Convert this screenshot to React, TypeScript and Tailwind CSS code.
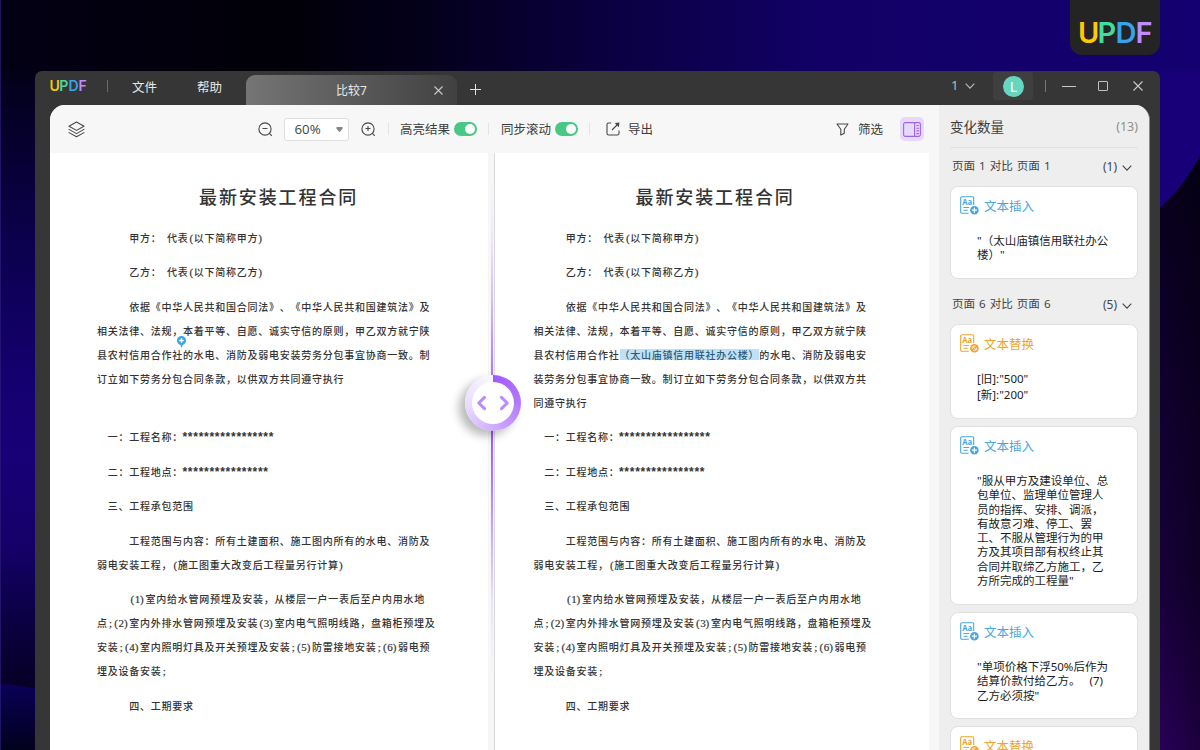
import React from "react";

type Line = { text: string; indent?: number };

const intro: Line[][] = [
  [{ text: "甲方： 代表(以下简称甲方)", indent: 3 }],
  [{ text: "乙方： 代表(以下简称乙方)", indent: 3 }],
];

const rest: Line[][] = [
  [{ text: "一：工程名称：*****************", indent: 1 }],
  [{ text: "二：工程地点：****************", indent: 1 }],
  [{ text: "三、工程承包范围", indent: 1 }],
  [
    { text: "工程范围与内容：所有土建面积、施工图内所有的水电、消防及", indent: 3 },
    { text: "弱电安装工程，(施工图重大改变后工程量另行计算)" },
  ],
  [
    { text: "(1)室内给水管网预埋及安装，从楼层一户一表后至户内用水地", indent: 3 },
    { text: "点;(2)室内外排水管网预埋及安装(3)室内电气照明线路，盘箱柜预埋及" },
    { text: "安装;(4)室内照明灯具及开关预埋及安装;(5)防雷接地安装;(6)弱电预" },
    { text: "埋及设备安装;" },
  ],
  [{ text: "四、工期要求", indent: 3 }],
];

const leftBody: Line[] = [
  { text: "依据《中华人民共和国合同法》、《中华人民共和国建筑法》及", indent: 3 },
  { text: "相关法律、法规，本着平等、自愿、诚实守信的原则，甲乙双方就宁陕" },
  { text: "县农村信用合作社的水电、消防及弱电安装劳务分包事宜协商一致。制" },
  { text: "订立如下劳务分包合同条款，以供双方共同遵守执行" },
  { text: "" },
];

const rightBody: Line[] = [
  leftBody[0],
  leftBody[1],
  { text: "县农村信用合作社[（太山庙镇信用联社办公楼）]的水电、消防及弱电安" },
  { text: "装劳务分包事宜协商一致。制订立如下劳务分包合同条款，以供双方共" },
  { text: "同遵守执行" },
];

function HalfWidth({ ch }: { ch: string }) {
  const base =
    "inline-block w-[5.385px] whitespace-pre font-['Liberation_Serif'] text-[11px] font-normal leading-none tracking-normal [-webkit-text-stroke:0.2px_#333]";
  if (ch === "(") return <span className={`${base} pl-[1.2px]`}>{ch}</span>;
  if (ch === ")") return <span className={base}>{ch}</span>;
  return <span className={`${base} text-center`}>{ch}</span>;
}

function Runs({ text }: { text: string }) {
  const parts = text.split(/([\x20-\x5a\x5c\x5e-\x7e]+)/).filter(Boolean);
  return (
    <>
      {parts.map((p, i) => {
        if (p[0] === "*") {
          return (
            <span key={i} className="-ml-[1.8px] font-['Liberation_Mono'] text-[12px] font-bold leading-none tracking-[-1.81px]">
              {p}
            </span>
          );
        }
        if (/^[\x20-\x7e]+$/.test(p)) {
          return (
            <span key={i}>
              {p.split("").map((ch, j) => (
                <HalfWidth key={j} ch={ch} />
              ))}
            </span>
          );
        }
        return <span key={i}>{p}</span>;
      })}
    </>
  );
}

function DocLine({ line }: { line: Line }) {
  const [before, marked, after] = line.text.split(/[[\]]/);
  return (
    <div className="h-6 leading-6" style={{ paddingLeft: (line.indent ?? 0) * 10.77 }}>
      <Runs text={before} />
      {marked && (
        <span className="bg-[linear-gradient(to_bottom,transparent_2px,#bfe1f6_2px,#bfe1f6_13px,transparent_13px)] text-[#2d5a75]">
          <Runs text={marked} />
        </span>
      )}
      {after && <Runs text={after} />}
    </div>
  );
}

function Doc({ body, marker }: { body: Line[]; marker?: boolean }) {
  return (
    <div className="relative whitespace-pre pt-[31px] font-['Noto_Sans_CJK_SC',sans-serif] text-[10px] font-medium tracking-[0.75px] text-[#333] [text-spacing-trim:space-all]">
      <h1 className="h-[24px] pl-[102px] text-[18px] font-medium leading-[24px] tracking-[1.9px] text-[#333]">
        最新安装工程合同
      </h1>
      <div className="flex flex-col gap-[10.5px] pt-[17.5px]">
        {[...intro, body, ...rest].map((p, i) => (
          <div key={i}>
            {p.map((l, j) => (
              <DocLine key={j} line={l} />
            ))}
          </div>
        ))}
      </div>
      {marker && (
        <svg className="absolute left-[80px] top-[183px]" width="9" height="12" viewBox="0 0 9 12">
          <path d="M4.5 12 3 8h3z" fill="#3ba6df" />
          <circle cx="4.5" cy="4.5" r="4.5" fill="#3ba6df" />
          <path d="M4.5 2.2v4.6M2.2 4.5h4.6" stroke="#fff" strokeWidth="1.4" />
        </svg>
      )}
    </div>
  );
}

function Logo({ big }: { big?: boolean }) {
  return big ? (
    <div className="flex font-['Inter',sans-serif] text-[29px] font-semibold leading-[30px]">
      <span className="w-[19.5px] text-[#ffc803]">U</span>
      <span className="w-[18px] text-[#43dc9c]">P</span>
      <span className="w-[20px] text-[#35a4ea]">D</span>
      <span className="text-[#bd8cff]">F</span>
    </div>
  ) : (
    <div className="flex font-['Inter',sans-serif] text-[14px] font-semibold leading-[16px]">
      <span className="w-[9.8px] text-[#ffc803]">U</span>
      <span className="w-[9.200px] text-[#43dc9c]">P</span>
      <span className="w-[10px] text-[#35a4ea]">D</span>
      <span className="text-[#bd8cff]">F</span>
    </div>
  );
}

function Chevron({ className }: { className: string }) {
  return (
    <svg className={className} width="10" height="6" viewBox="0 0 10 6" fill="none" stroke="currentColor" strokeWidth="1.1">
      <path d="M.7.7 5 5.1 9.3.7" />
    </svg>
  );
}

function Toggle() {
  return (
    <div className="flex h-[14px] w-[23px] items-center justify-end rounded-full bg-[#49c885] pr-[2px]">
      <div className="h-[10px] w-[10px] rounded-full bg-white" />
    </div>
  );
}

function Zoom({ plus }: { plus?: boolean }) {
  return (
    <svg width="15" height="15" viewBox="0 0 15 15" fill="none" stroke="#484848" strokeWidth="1.1">
      <circle cx="7" cy="7" r="6.1" />
      <path d="m11.4 11.4 2.4 2.4M4.5 6.500h5" />
      {plus && <path d="M7 4v5" />}
    </svg>
  );
}

function TitleBar() {
  return (
    <div className="flex h-[34px] shrink-0 items-start text-[#e8e8e8]">
      <div className="w-[57px] pl-[14.5px] pt-[7px]">
        <Logo />
      </div>
      <div className="ml-[15px] mt-[9px] h-[12px] w-px bg-[#6b6b6b]" />
      <div className="ml-[24px] mt-[6.500px] w-[65px] text-[12.5px] leading-[20px]">文件</div>
      <div className="mt-[6.500px] w-[49px] text-[12.5px] leading-[20px]">帮助</div>
      <div className="mt-[4px] flex h-[31px] w-[211px] items-center rounded-t-[9px] bg-linear-to-r from-[#757575] to-[#414141]">
        <div className="w-[188px] pl-[90px] text-[12px] leading-[20px]">比较7</div>
        <svg className="-mt-[1px]" width="9" height="9" viewBox="0 0 9 9" stroke="#c8c8c8" strokeWidth="1.1">
          <path d="m.5.5 8 8M8.500.5l-8 8" />
        </svg>
      </div>
      <svg className="ml-[13px] mt-[13px]" width="11" height="11" viewBox="0 0 11 11" stroke="#e0e0e0" strokeWidth="1">
        <path d="M5.5 0v11M0 5.5h11" />
      </svg>
      <div className="ml-auto flex h-[30px] items-center">
        <span className="w-[14px] text-[13px] text-[#bdbdbd]">1</span>
        <Chevron className="text-[#bdbdbd]" />
        <div className="ml-[18px] flex h-[28px] w-[40px] items-center justify-center rounded-[3px] bg-[#3f3f3f]">
          <div className="flex h-[21px] w-[21px] items-center justify-center rounded-full bg-[#66d7be] pt-px pl-px text-[14px] leading-none text-white">
            L
          </div>
        </div>
        <div className="ml-[12px] h-[12px] w-px bg-[#777]" />
        <div className="ml-[16px] h-px w-[14px] bg-[#c9c9c9]" />
        <div className="ml-[22px] h-[10px] w-[10px] rounded-[1px] border border-[#c0c0c0]" />
        <svg className="ml-[25px] mr-[17px]" width="10" height="10" viewBox="0 0 10 10" stroke="#c9c9c9" strokeWidth="1.1">
          <path d="m.5.5 9 9M9.500.5l-9 9" />
        </svg>
      </div>
    </div>
  );
}

function Toolbar() {
  return (
    <div className="flex h-[48px] shrink-0 items-center bg-[#f7f7f7] text-[12.5px] text-[#3c3c3c]">
      <svg className="ml-[18px]" width="17" height="17" viewBox="0 0 17 17" fill="none" stroke="#484848" strokeWidth="1.05" strokeLinejoin="round" strokeLinecap="round">
        <path d="M8.500 1 16 5.200 8.500 9.400 1 5.200zM1 8.400l7.500 4.200L16 8.400M1 11.600l7.500 4.200 7.500-4.200" />
      </svg>
      <div className="ml-[173px] flex">
        <Zoom />
      </div>
      <div className="ml-[11px] flex h-[23px] w-[65px] items-center rounded-[3px] border border-[#dedede] bg-white pl-[9.5px] pt-px font-['Open_Sans',sans-serif] text-[13.3px] text-[#444]">
        60%
        <svg className="ml-auto mr-[5px] mt-[1px]" width="7" height="6" viewBox="0 0 7 6" fill="#858585">
          <path d="M.5 0h6v1.800L3.500 5.200.5 1.800z" />
        </svg>
      </div>
      <div className="ml-[12px] flex">
        <Zoom plus />
      </div>
      <div className="ml-[12px] h-[12px] w-px bg-[#e4e4e4]" />
      <span className="ml-[11px] w-[54px] pt-[2px]">高亮结果</span>
      <Toggle />
      <div className="ml-[11px] h-[12px] w-px bg-[#e4e4e4]" />
      <span className="ml-[12px] w-[54px] pt-[2px]">同步滚动</span>
      <Toggle />
      <div className="ml-[11px] h-[12px] w-px bg-[#e4e4e4]" />
      <svg className="ml-[16px] w-[14px]" width="14" height="14" viewBox="0 0 14 14" fill="none" stroke="#484848" strokeWidth="1.1">
        <path d="M5.200 1H2.600A1.600 1.600 0 0 0 1 2.600v8.800A1.600 1.600 0 0 0 2.600 13h8.800a1.600 1.600 0 0 0 1.600-1.600V8.600M6 8l6-6" />
        <path d="m8.700 1 4.700-.5-.5 4.700z" fill="#484848" stroke="none" />
      </svg>
      <span className="ml-[8px] pt-[2px]">导出</span>
      <svg className="ml-auto" width="13" height="13" viewBox="0 0 13 13" fill="none" stroke="#484848" strokeWidth="1.100" strokeLinejoin="round">
        <path d="M1 1h11L8.300 6.300v4L4.800 12V6.300z" />
      </svg>
      <span className="ml-[9px] w-[42px] pt-[2px]">筛选</span>
      <div className="mr-[15px] flex h-[24px] w-[24px] items-center justify-center rounded-[5px] bg-[#e6d9fb]">
        <svg width="18" height="15" viewBox="0 0 18 15" fill="none" stroke="#a264e4" strokeWidth="1.100">
          <rect x=".6" y=".6" width="16.800" height="13.800" rx="1.600" />
          <path d="M11.600.6v13.800M13.400 3.500h2.600M13.400 6.200h2.600M13.400 8.900h2.600M13.400 11.600h2.600" />
        </svg>
      </div>
    </div>
  );
}

function Divider() {
  return (
    <div className="relative flex w-[7px] shrink-0 justify-end bg-[#f6f6f6]">
      <div className="mr-[1px] w-[2px] bg-[linear-gradient(to_bottom,transparent_35px,#ede3fc_90px,#d9c0fd_140px,#b07cff_215px,#9f55ff_280px,#b07aff_330px,#cfb0ff_390px,#ebe2fa_450px,transparent_520px)]" />
      <div className="w-px bg-[#dcdcdf]" />
      <div className="absolute left-[-23px] top-[222px] flex h-[56px] w-[56px] items-center justify-center rounded-full bg-[conic-gradient(#a259ff_0deg,#b379ff_90deg,#cfadff_180deg,#e9dcff_265deg,#fbf9ff_360deg)] shadow-[-6px_5px_10px_rgba(0,0,0,0.28)]">
        <div className="flex h-[42px] w-[42px] items-center justify-center rounded-full bg-white">
          <svg width="32" height="16" viewBox="0 0 32 16" fill="none" stroke="#b98bff" strokeWidth="3" strokeLinecap="round" strokeLinejoin="round">
            <path d="M7.500 2.400 1.800 8l5.700 5.600M24.500 2.400 30.200 8l-5.700 5.600" />
          </svg>
        </div>
      </div>
    </div>
  );
}

type Kind = "insert" | "replace";

function ChangeIcon({ kind }: { kind: Kind }) {
  const c = kind === "insert" ? "#46a8dc" : "#eda52c";
  return (
    <svg width="19" height="19" viewBox="0 0 19 19" fill="none" stroke={c} strokeWidth="1.1">
      <path d="M8.8 17.3H1.9a1.2 1.2 0 0 1-1.2-1.2V1.9A1.2 1.2 0 0 1 1.900.7h10.600a1.200 1.200 0 0 1 1.200 1.200v7.100M3.400 11.500h5.800M3.400 14.300h4.300" />
      <text x="2.2" y="9" fontSize="8" fontWeight="700" fontFamily="Open Sans" fill={c} stroke="none" textLength="10" lengthAdjust="spacingAndGlyphs">
        Aa
      </text>
      <circle cx="14.400" cy="14.200" r="4.300" fill={c} stroke="none" />
      {kind === "insert" ? (
        <path d="M14.400 11.700v5M11.900 14.200h5" stroke="#fff" strokeWidth="1.200" />
      ) : (
        <path d="M12.100 14.600a2.300 2.300 0 0 1 3.500-2.300M16.700 13.800a2.300 2.300 0 0 1-3.500 2.300M12.800 12.600l3.200 3.200" stroke="#fff" strokeWidth=".9" />
      )}
    </svg>
  );
}

function Card({ kind, height, lines, loose }: { kind: Kind; height: string; lines: string[]; loose?: boolean }) {
  return (
    <div className={`${height} shrink-0 rounded-[8px] border border-[#e0e0e0] bg-white pl-[9px] pt-[9px]`}>
      <div className="flex h-[20px] items-center">
        <div className="-mt-[1px]">
          <ChangeIcon kind={kind} />
        </div>
        <span className={`ml-[5px] pt-[2px] text-[12.5px] ${kind === "insert" ? "text-[#46a8dc]" : "text-[#eda52c]"}`}>
          {kind === "insert" ? "文本插入" : "文本替换"}
        </span>
      </div>
      <div
        className={`pl-[17px] text-[11.5px] text-[#1c1c1c] [text-spacing-trim:space-all] ${
          loose ? "pt-[16.5px] leading-[16.3px]" : "pt-[18px] leading-[14.3px]"
        }`}
      >
        {lines.map((l) => (
          <div key={l} className="whitespace-pre">
            {l}
          </div>
        ))}
      </div>
    </div>
  );
}

function Section({ page, count }: { page: number; count: number }) {
  return (
    <div className="flex h-[38px] shrink-0 items-start pl-[2px] pr-[6px] text-[12px] leading-[18px] text-[#444]">
      <span className="pt-[9px] text-[11.600px] [word-spacing:0.900px]">
        页面 {page} 对比 页面 {page}
      </span>
      <span className="ml-auto pt-[10px]">({count})</span>
      <Chevron className="ml-[5px] mt-[17px] text-[#444]" />
    </div>
  );
}

function Sidebar() {
  return (
    <div className="flex w-[210px] shrink-0 flex-col overflow-hidden bg-[#eeeeee] pl-[11px] pr-[11px]">
      <div className="flex h-[43px] shrink-0 items-center justify-between border-b border-[#e2e2e2] pt-[2px] text-[13.5px] text-[#3c3c3c]">
        变化数量<span className="text-[12.5px] text-[#8e8e8e]">(13)</span>
      </div>
      <Section page={1} count={1} />
      <Card kind="insert" height="h-[93px]" lines={['"（太山庙镇信用联社办公', '楼）"']} />
      <div className="h-[7px] shrink-0" />
      <Section page={6} count={5} />
      <Card kind="replace" height="h-[95px]" loose lines={['[旧]:"500"', '[新]:"200"']} />
      <div className="h-[7px] shrink-0" />
      <Card
        kind="insert"
        height="h-[179px]"
        lines={[
          '"服从甲方及建设单位、总',
          "包单位、监理单位管理人",
          "员的指挥、安排、调派，",
          "有故意刁难、停工、罢",
          "工、不服从管理行为的甲",
          "方及其项目部有权终止其",
          "合同并取缔乙方施工，乙",
          '方所完成的工程量"',
        ]}
      />
      <div className="h-[7px] shrink-0" />
      <Card kind="insert" height="h-[107px]" lines={['"单项价格下浮50%后作为', "结算价款付给乙方。   (7)", '乙方必须按"']} />
      <div className="h-[7px] shrink-0" />
      <Card kind="replace" height="h-[94px]" loose lines={[]} />
    </div>
  );
}

function Backdrop() {
  return (
    <svg className="absolute inset-0" width="1200" height="750" viewBox="0 0 1200 750">
      <defs>
        <linearGradient id="top" x1="0" x2="1">
          <stop offset="0" stopColor="#030014" />
          <stop offset=".24" stopColor="#010008" />
          <stop offset=".36" stopColor="#04001c" />
          <stop offset=".52" stopColor="#0b0044" />
          <stop offset=".68" stopColor="#120066" />
          <stop offset="1" stopColor="#140070" />
        </linearGradient>
        <linearGradient id="left" x1="0" x2="0" y1="0" y2="1">
          <stop offset="0" stopColor="#030018" />
          <stop offset=".27" stopColor="#0b004c" />
          <stop offset=".5" stopColor="#150070" />
          <stop offset=".62" stopColor="#180078" />
          <stop offset=".77" stopColor="#150068" />
          <stop offset=".88" stopColor="#0b0044" />
          <stop offset="1" stopColor="#060024" />
        </linearGradient>
        <linearGradient id="corner" x1="0" x2="0" y1="0" y2="1">
          <stop offset="0" stopColor="#0b0058" />
          <stop offset="1" stopColor="#02001c" />
        </linearGradient>
        <linearGradient id="right" x1="0" x2="0" y1="0" y2="1">
          <stop offset="0" stopColor="#07001c" />
          <stop offset=".5" stopColor="#130035" />
          <stop offset=".72" stopColor="#18003b" />
          <stop offset="1" stopColor="#2a005c" />
        </linearGradient>
        <linearGradient id="edge">
          <stop offset="0" stopColor="#000" stopOpacity="0" />
          <stop offset="1" stopColor="#000" stopOpacity=".35" />
        </linearGradient>
      </defs>
      <path d="M0 0h1200v750H0z" fill="url(#top)" />
      <path d="M0 70h40v620H0z" fill="url(#left)" />
      <path d="M0 683l40 6v61H0z" fill="url(#corner)" />
      <path d="M1150 71h50v200h-50z" fill="#170078" />
      <path d="M1150 216q28-20 50-60v594h-50z" fill="url(#right)" />
      <path d="M1155 212q25-20 45-56v594h-45z" fill="url(#edge)" />
      <path d="M0 0h1v750H0z" fill="#2b1d78" opacity=".7" />
    </svg>
  );
}

export default function App() {
  return (
    <div className="relative h-[750px] w-[1200px] overflow-hidden bg-[#03000f] font-['Noto_Sans','Noto_Sans_CJK_SC',sans-serif]">
      <Backdrop />
      <div className="absolute right-[40px] top-0 flex h-[55px] w-[90px] rounded-b-[12px] bg-[#242424] pl-[8px] pt-[17.5px]">
        <Logo big />
      </div>
      <div className="relative ml-[35px] mt-[71px] flex h-[679px] w-[1125px] flex-col overflow-hidden rounded-t-[7px] bg-[#363636]">
        <TitleBar />
        <div className="ml-[15px] flex min-h-0 w-[1100px] flex-1 overflow-hidden rounded-t-[15px] border-r border-[#8a8a8a] bg-[#eeeeee]">
          <div className="flex w-[889px] shrink-0 flex-col">
            <Toolbar />
            <div className="flex min-h-0 flex-1">
              <div className="w-[438px] shrink-0 bg-white pl-[47px]">
                <Doc body={leftBody} marker />
              </div>
              <Divider />
              <div className="w-[434px] shrink-0 bg-white pl-[38.5px]">
                <Doc body={rightBody} />
              </div>
              <div className="flex-1 bg-[#f7f7f7]" />
            </div>
          </div>
          <Sidebar />
        </div>
      </div>
    </div>
  );
}
